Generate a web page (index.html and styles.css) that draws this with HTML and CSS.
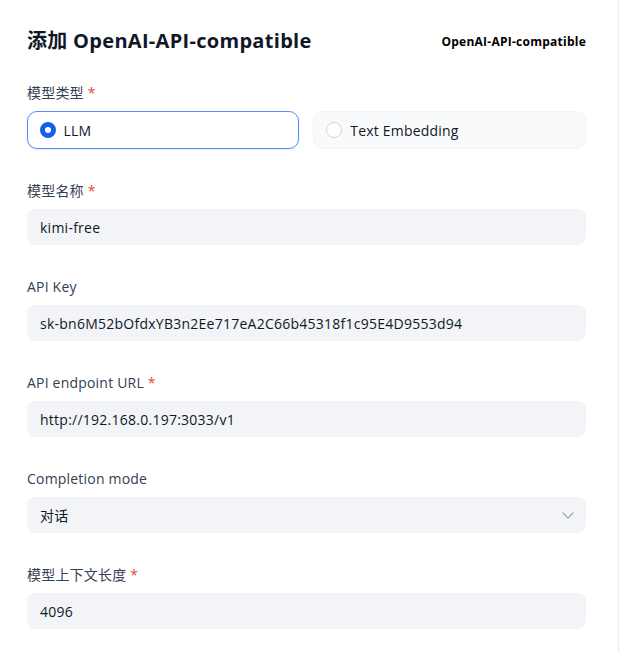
FILE: index.html
```html
<!DOCTYPE html>
<html lang="zh">
<head>
<meta charset="utf-8">
<link rel="stylesheet" href="styles.css">
</head>
<body>
<div class="panel">
  <div class="header">
    <h1 class="title">添加 OpenAI-API-compatible</h1>
    <span class="tag">OpenAI-API-compatible</span>
  </div>

  <div class="field">
    <div class="label">模型类型 <span class="req">*</span></div>
    <div class="radios">
      <div class="radio-card selected"><span class="dot"></span><span>LLM</span></div>
      <div class="radio-card"><span class="dot"></span><span>Text Embedding</span></div>
    </div>
  </div>

  <div class="field">
    <div class="label">模型名称 <span class="req">*</span></div>
    <div class="input">kimi-free</div>
  </div>

  <div class="field">
    <div class="label">API Key</div>
    <div class="input">sk-bn6M52bOfdxYB3n2Ee717eA2C66b45318f1c95E4D9553d94</div>
  </div>

  <div class="field">
    <div class="label">API endpoint URL <span class="req">*</span></div>
    <div class="input">http://192.168.0.197:3033/v1</div>
  </div>

  <div class="field">
    <div class="label">Completion mode</div>
    <div class="input select"><span>对话</span>
      <svg class="chev" width="16" height="16" viewBox="0 0 16 16"><path d="M3 6l5 5 5-5" fill="none" stroke="#a4abb8" stroke-width="1.3" stroke-linecap="round" stroke-linejoin="round"/></svg>
    </div>
  </div>

  <div class="field">
    <div class="label">模型上下文长度 <span class="req">*</span></div>
    <div class="input">4096</div>
  </div>
</div>
</body>
</html>
```

FILE: styles.css
```css
* { box-sizing: border-box; }
html, body { margin: 0; background: #fff; }
body {
  font-family: "Open Sans", "Noto Sans CJK SC", sans-serif;
  color: #101828;
}
.panel {
  width: 619px;
  height: 653px;
  border-right: 1px solid #ececec;
  padding: 27px 32px 0 27px;
}
.header {
  display: flex;
  align-items: center;
  justify-content: space-between;
  height: 28px;
  margin-bottom: 28px;
}
.title {
  margin: 0;
  font-size: 20px;
  line-height: 28px;
  font-weight: 700;
  letter-spacing: 0.3px;
  color: #101828;
}
.tag {
  font-size: 12px;
  font-weight: 700;
  letter-spacing: 0.25px;
  color: #000;
}
.field { margin-bottom: 32px; }
.label {
  font-size: 14px;
  line-height: 20px;
  letter-spacing: 0.2px;
  color: #344054;
  margin-bottom: 8px;
}
.req { color: #f04438; }
.radios {
  display: flex;
  gap: 14px;
}
.radio-card {
  flex: 1;
  height: 38px;
  display: flex;
  align-items: center;
  gap: 8px;
  padding: 0 12px;
  border-radius: 10px;
  border: 1px solid #f2f4f7;
  background: #f9fafb;
  font-size: 14px;
  letter-spacing: 0.2px;
  color: #101828;
}
.radio-card.selected {
  background: #fff;
  border: 1.5px solid #528bff;
  box-shadow: 0 1px 2px rgba(16,24,40,0.08);
  padding-left: 11.5px;
}
.dot {
  width: 16px;
  height: 16px;
  border-radius: 50%;
  border: 1px solid #d0d5dd;
  background: #fff;
  flex: none;
}
.selected .dot {
  border: 5px solid #155eef;
}
.input {
  height: 36px;
  border-radius: 8px;
  background: #f2f4f7;
  padding: 0 13px;
  display: flex;
  align-items: center;
  font-size: 14px;
  letter-spacing: 0.25px;
  color: #101828;
}
.select { justify-content: space-between; padding-right: 10px; }
.chev { flex: none; }
```
